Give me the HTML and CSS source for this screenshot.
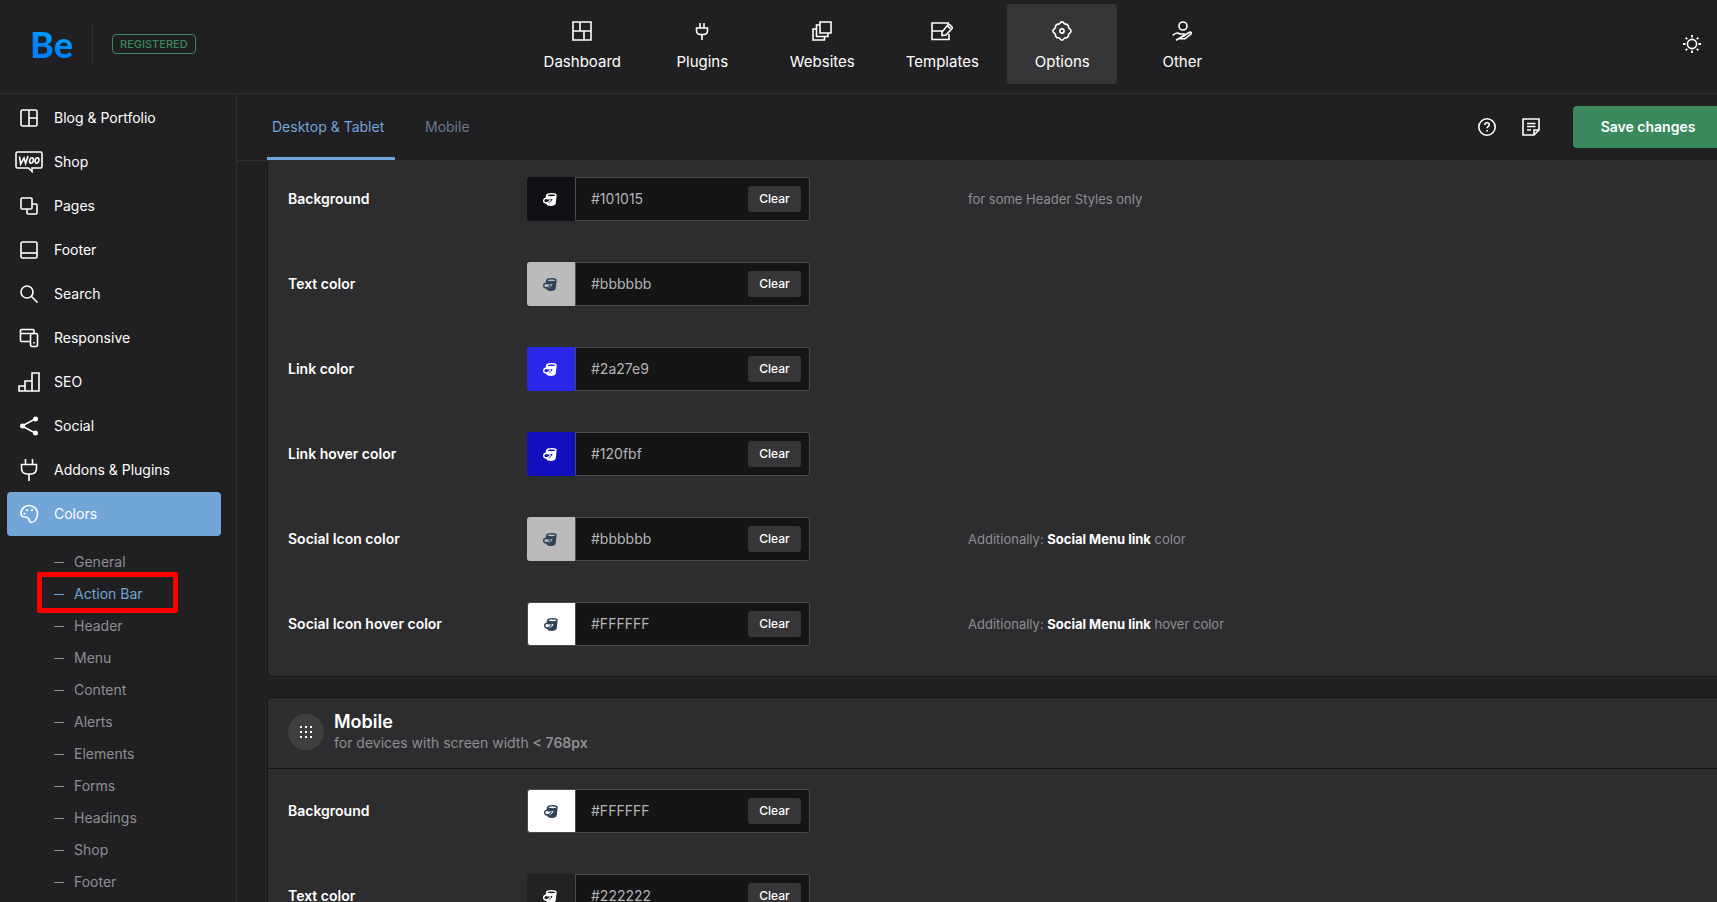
FILE: index.html
```
<!DOCTYPE html>
<html lang="en">
<head>
<meta charset="utf-8">
<meta name="viewport" content="width=device-width, initial-scale=1">
<title>Be Theme Options</title>
<link rel="stylesheet" href="styles.css">
</head>
<body>
<svg class="sprite" aria-hidden="true">
  <symbol id="bucket" viewBox="0 0 14 13"><path fill="currentColor" fill-rule="evenodd" d="M3 2.200C3.200.8 5.500 0 8.700 0c3.200 0 5.200.8 5 2.200l-1 8.300C12.500 12 10.500 13 7.900 13c-2.700 0-4.300-.8-4.600-2.200C1.200 10.800 0 9.600 0 7.800 0 6.100 1 5 2.700 4.600ZM4.400 2.300c.7.600 2.200.9 4.100.9 1.900 0 3.300-.3 4-.9-.7-.6-2-.9-4-.9s-3.400.3-4.100.9ZM2.900 5.900C1.900 6.200 1.400 6.900 1.400 7.800c0 .9.700 1.300 1.600 1.300 1.500-.1 3-1 4.200-2.700l.9.600c-1 1.700-2.300 2.700-3.600 3.200 2.500-.4 4.500-2 5-4.400-2 .8-4.600.8-6.600.1Z"/></symbol>
</svg>

<header class="topbar">
  <div class="brand">
    <a class="logo" href="#">Be</a>
    <span class="badge">REGISTERED</span>
  </div>
  <nav class="topnav" aria-label="Main">
    <a href="#"><svg class="icon" viewBox="0 0 20 20"><path d="M1 1h18v18H1ZM8 1v9M1 10h18M12 10v9"/></svg>Dashboard</a>
    <a href="#"><svg class="icon" viewBox="0 0 20 20"><path d="M8 2v5M12 2v5M4.500 7h11v2.500c0 2.500-1.500 4-4 4h-3c-2.500 0-4-1.500-4-4ZM10 13.500V19"/></svg>Plugins</a>
    <a href="#"><svg class="icon" viewBox="0 0 20 20"><path d="M8 1h11v11H8ZM8 4H4.500v11.500H16V12M4.500 8H1v11h11.500v-3.500"/></svg>Websites</a>
    <a href="#"><svg class="icon icon-wide" viewBox="0 0 22 20"><path d="M18 2H1v16.500h17V13M1 10h11M18.500 3.500l2.500 2.500c.4.500.4 1 0 1.500L15 14l-4 .5V11l6.200-7.400c.4-.4.900-.4 1.300-.1ZM16.500 5l3 2.700"/></svg>Templates</a>
    <a class="active" href="#" aria-current="page"><svg class="icon" viewBox="0 0 20 20"><path d="M10 .9C11.700.9 11.800 3 13.300 3.200c1.500-.5 3.700 1.300 3.300 3.500.7 1.200 2.500 1.500 2.500 3.300s-1.800 2.100-2.500 3.300c.4 2.200-1.800 4-3.300 3.500-1.500.2-1.600 2.300-3.300 2.300s-1.800-2.100-3.300-2.300c-1.500.5-3.700-1.300-3.300-3.500C2.700 12.100.9 11.800.9 10s1.800-2.100 2.500-3.300C3 4.500 5.200 2.700 6.700 3.200 8.200 3 8.300.9 10 .9Z"/><circle cx="10" cy="10" r="2.100"/></svg>Options</a>
    <a href="#"><svg class="icon" viewBox="0 0 20 20"><circle cx="11" cy="5" r="4"/><path d="M.8 14.500c2-2.500 5-3.200 7.200-1.500h4c1.200 0 1.200 2 0 2.200l-3 .3M13 14l4.500-2.700c1.600-.6 2.400.7 1.200 1.800L13 17.800H6.500L4 19.200Z"/></svg>Other</a>
  </nav>
  <div class="topbar-end">
    <button class="plain" type="button" aria-label="Light mode"><svg class="icon" viewBox="0 0 20 20"><circle cx="10" cy="10" r="4.600"/><path stroke-width="1.800" d="M10 1v2.500M10 16.500V19M1 10h2.500M16.500 10H19M3.600 3.600l1.600 1.600M14.800 14.800l1.600 1.600M3.600 16.400l1.600-1.600M14.800 5.200l1.600-1.600"/></svg></button>
  </div>
</header>

<div class="shell">
  <aside class="sidebar">
    <nav aria-label="Options">
      <a class="item" href="#"><svg class="icon" viewBox="0 0 20 20"><rect x="2" y="2" width="16" height="16" rx="1.500"/><path d="M10 2v16M10 10h8"/></svg>Blog &amp; Portfolio</a>
      <a class="item" href="#"><svg class="icon icon-woo" viewBox="0 0 28 22"><path d="M2.500 1h23c1 0 1.500.5 1.500 1.500v13c0 1-.5 1.500-1.500 1.500H17v3.500L13.500 17h-11C1.500 17 1 16.500 1 15.500v-13C1 1.500 1.500 1 2.500 1Z"/><path d="m4.500 5.500 1.200 7.500L9 7l1.600 5.500 2.400-7.500"/><ellipse cx="16.500" cy="9.500" rx="1.800" ry="2.800" transform="rotate(14 16.500 9.500)"/><ellipse cx="22" cy="9.500" rx="1.800" ry="2.800" transform="rotate(14 22 9.500)"/></svg>Shop</a>
      <a class="item" href="#"><svg class="icon" viewBox="0 0 20 20"><rect x="2" y="2" width="11" height="11" rx="1"/><path d="M13 8h4q1 0 1 1v8q0 1-1 1H9q-1 0-1-1v-4"/></svg>Pages</a>
      <a class="item" href="#"><svg class="icon" viewBox="0 0 20 20"><rect x="2" y="2" width="16" height="16" rx="1.500"/><path d="M2 13h16"/></svg>Footer</a>
      <a class="item" href="#"><svg class="icon" viewBox="0 0 20 20"><circle cx="8" cy="8" r="6"/><path d="m12.500 12.500 6 6"/></svg>Search</a>
      <a class="item" href="#"><svg class="icon" viewBox="0 0 20 20"><path d="M15 5V2.500q0-1-1-1H2.500q-1 0-1 1v10q0 1 1 1H11M1.500 5.500H15"/><rect x="11.500" y="5.500" width="7" height="13" rx="1.500"/><path d="M15 14v1.500"/></svg>Responsive</a>
      <a class="item" href="#"><svg class="icon icon-seo" viewBox="0 0 22 20"><path d="M1 14h6v5H1ZM7 9h7v10H7ZM14 1h7v18h-7Z"/></svg>SEO</a>
      <a class="item" href="#"><svg class="icon" viewBox="0 0 20 20"><path d="M17 2.500 3 10l14 7.500"/><g fill="currentColor" stroke="none"><circle cx="16.500" cy="3" r="2.500"/><circle cx="3.500" cy="10" r="2.500"/><circle cx="16.500" cy="17" r="2.500"/></g></svg>Social</a>
      <a class="item" href="#"><svg class="icon icon-plug" viewBox="0 0 20 24"><path d="M6.500 1v5.500M13.500 1v5.500M2.500 6.500h15V10c0 4-2 6-5.500 6H8c-3.500 0-5.500-2-5.500-6ZM10 16v7"/></svg>Addons &amp; Plugins</a>
      <a class="item active" href="#" aria-current="page"><svg class="icon" viewBox="0 0 20 20"><path d="M2 9.500C2 5 5.500 1.500 10 1.500s8.500 3.500 8.500 8c0 5-3 9-6 9-2.500 0-2-3-3.500-4.500-2-2-7 .5-7-4.500Z"/><path d="M5.500 9.500v.2M8 6v.2M13 6v.2" stroke-linecap="round" stroke-width="2.200"/></svg>Colors</a>
      <ul class="subnav">
        <li><a href="#">General</a></li>
        <li class="marked"><a class="current" href="#">Action Bar</a></li>
        <li><a href="#">Header</a></li>
        <li><a href="#">Menu</a></li>
        <li><a href="#">Content</a></li>
        <li><a href="#">Alerts</a></li>
        <li><a href="#">Elements</a></li>
        <li><a href="#">Forms</a></li>
        <li><a href="#">Headings</a></li>
        <li><a href="#">Shop</a></li>
        <li><a href="#">Footer</a></li>
      </ul>
    </nav>
  </aside>

  <main class="main">
    <div class="toolbar">
      <nav class="tabs" aria-label="Devices">
        <a class="active" href="#">Desktop &amp; Tablet</a>
        <a href="#">Mobile</a>
      </nav>
      <div class="tools">
        <button class="plain" type="button" aria-label="Help"><svg class="icon" viewBox="0 0 20 20"><circle cx="10" cy="10" r="8.200"/><path d="M7.700 8c.1-1.400 1-2.200 2.300-2.200s2.300.8 2.300 2c0 1.600-2.200 1.700-2.200 3.400M10.100 13v1.600"/></svg></button>
        <button class="plain" type="button" aria-label="Notes"><svg class="icon" viewBox="0 0 20 20"><path d="M2 2h16v11l-5 5H2ZM13 18v-5h5M6 6.500h8.500M6 9.500h8.500M6 13h4"/></svg></button>
        <button class="save" type="button">Save changes</button>
      </div>
    </div>

    <div class="content">
      <section class="card card-scrolled">
        <div class="rows">
          <div class="row"><label for="d1">Background</label><div class="field"><button class="swatch" style="background:#101015" type="button" aria-label="Pick background"><svg><use href="#bucket"/></svg></button><input id="d1" type="text" value="#101015"><button class="clear" type="button">Clear</button></div><p class="note">for some Header Styles only</p></div>
          <div class="row"><label for="d2">Text color</label><div class="field"><button class="swatch light" style="background:#bbbbbb" type="button" aria-label="Pick text color"><svg><use href="#bucket"/></svg></button><input id="d2" type="text" value="#bbbbbb"><button class="clear" type="button">Clear</button></div></div>
          <div class="row"><label for="d3">Link color</label><div class="field"><button class="swatch" style="background:#2a27e9" type="button" aria-label="Pick link color"><svg><use href="#bucket"/></svg></button><input id="d3" type="text" value="#2a27e9"><button class="clear" type="button">Clear</button></div></div>
          <div class="row"><label for="d4">Link hover color</label><div class="field"><button class="swatch" style="background:#120fbf" type="button" aria-label="Pick link hover color"><svg><use href="#bucket"/></svg></button><input id="d4" type="text" value="#120fbf"><button class="clear" type="button">Clear</button></div></div>
          <div class="row"><label for="d5">Social Icon color</label><div class="field"><button class="swatch light" style="background:#bbbbbb" type="button" aria-label="Pick social icon color"><svg><use href="#bucket"/></svg></button><input id="d5" type="text" value="#bbbbbb"><button class="clear" type="button">Clear</button></div><p class="note">Additionally: <b>Social Menu link</b> color</p></div>
          <div class="row"><label for="d6">Social Icon hover color</label><div class="field"><button class="swatch light outlined" style="background:#ffffff" type="button" aria-label="Pick social icon hover color"><svg><use href="#bucket"/></svg></button><input id="d6" type="text" value="#FFFFFF"><button class="clear" type="button">Clear</button></div><p class="note">Additionally: <b>Social Menu link</b> hover color</p></div>
        </div>
      </section>

      <section class="card">
        <header class="card-head">
          <span class="grip"><svg viewBox="0 0 14 14"><path fill="currentColor" d="M1 1h2v2H1ZM6 1h2v2H6ZM11 1h2v2h-2ZM1 6h2v2H1ZM6 6h2v2H6ZM11 6h2v2h-2ZM1 11h2v2H1ZM6 11h2v2H6ZM11 11h2v2h-2Z"/></svg></span>
          <div>
            <h2>Mobile</h2>
            <p>for devices with screen width <b>&lt; 768px</b></p>
          </div>
        </header>
        <div class="rows">
          <div class="row"><label for="m1">Background</label><div class="field"><button class="swatch light outlined" style="background:#ffffff" type="button" aria-label="Pick mobile background"><svg><use href="#bucket"/></svg></button><input id="m1" type="text" value="#FFFFFF"><button class="clear" type="button">Clear</button></div></div>
          <div class="row"><label for="m2">Text color</label><div class="field"><button class="swatch" style="background:#222222" type="button" aria-label="Pick mobile text color"><svg><use href="#bucket"/></svg></button><input id="m2" type="text" value="#222222"><button class="clear" type="button">Clear</button></div></div>
        </div>
      </section>
    </div>
  </main>
</div>
</body>
</html>
```

FILE: styles.css
```
*, ::before, ::after { box-sizing: border-box; }

body {
  margin: 0;
  height: 100vh;
  display: flex;
  flex-direction: column;
  overflow: hidden;
  background: #202022;
  color: #fff;
  font: 14px/20px Inter, sans-serif;
}

a { color: inherit; text-decoration: none; }
button, input { font: inherit; color: inherit; }
h2, p, ul { margin: 0; padding: 0; }

.sprite { position: absolute; width: 0; height: 0; }

.icon {
  flex: none;
  width: 20px;
  height: 20px;
  fill: none;
  stroke: currentColor;
  stroke-width: 1.6;
}

.plain {
  display: flex;
  padding: 0;
  border: 0;
  background: none;
}

/* Top bar */
.topbar {
  flex: none;
  display: flex;
  justify-content: space-between;
  height: 94px;
  border-bottom: 1px solid #2f2f31;
}

.brand {
  display: flex;
  align-items: center;
  height: 88px;
  padding-left: 30px;
}

.logo {
  width: 63px;
  border-right: 1px solid #2f2f31;
  font: 900 36px/40px Lato, sans-serif;
  background: linear-gradient(20deg, #0080ff 35%, #00b4ff 80%);
  background-clip: text;
  -webkit-background-clip: text;
  color: transparent;
}

.badge {
  margin-left: 19px;
  padding: 0 7px;
  border: 1px solid #39895c;
  border-radius: 4px;
  color: #39895c;
  font-size: 11px;
  font-weight: 500;
  line-height: 18px;
}

.topnav {
  display: flex;
  gap: 10px;
  padding-top: 4px;
  font-size: 15px;
}

.topnav a {
  display: flex;
  flex-direction: column;
  align-items: center;
  gap: 11px;
  width: 110px;
  height: 80px;
  padding-top: 17px;
  border-radius: 4px;
}

.topnav .active { background: #363638; }
.icon-wide { width: 22px; }

.topbar-end {
  display: flex;
  justify-content: flex-end;
  align-items: center;
  width: 148px;
  height: 88px;
  padding-right: 15px;
}

/* Columns */
.shell {
  flex: 1;
  min-height: 0;
  display: flex;
}

.sidebar {
  flex: none;
  width: 237px;
  padding: 2px 15px 0 7px;
  border-right: 1px solid #2f2f31;
  overflow: hidden;
}

.item {
  display: flex;
  align-items: center;
  gap: 15px;
  height: 44px;
  padding-left: 12px;
  border-radius: 4px;
}

.item.active { background: #72a5d8; }
.icon-woo { width: 28px; height: 22px; margin: 0 -4px; }
.icon-seo { width: 22px; margin: 0 -1px; }
.icon-plug { height: 24px; }

.subnav {
  list-style: none;
  padding: 10px 0 0 47px;
  color: #8e8e94;
}

.subnav li { position: relative; }

.subnav a {
  display: flex;
  align-items: center;
  gap: 10px;
  height: 32px;
}

.subnav a::before {
  content: "";
  width: 10px;
  height: 1px;
  background: currentColor;
}

.subnav .current { color: #72a5d8; }

.marked::after {
  content: "";
  position: absolute;
  top: -6px;
  bottom: -3px;
  left: -17px;
  width: 141px;
  border: 5px solid #f00;
  border-radius: 2px;
  pointer-events: none;
}

/* Main area */
.main {
  flex: 1;
  min-width: 0;
  display: flex;
  flex-direction: column;
  overflow: hidden;
}

.toolbar {
  flex: none;
  display: flex;
  justify-content: space-between;
  align-items: center;
  height: 67px;
  margin-right: -6px;
  padding-left: 30px;
  border-bottom: 1px solid #2f2f31;
}

.tabs {
  display: flex;
  gap: 25px;
  color: #6c7891;
}

.tabs a {
  padding: 23px 5px 20px;
  border-bottom: 3px solid transparent;
  border-radius: 2px 2px 0 0;
}

.tabs .active {
  min-width: 128px;
  color: #72a5d8;
  border-color: #72a5d8;
}

.tools {
  display: flex;
  align-items: center;
  gap: 24px;
}

.save {
  width: 150px;
  height: 42px;
  margin-left: 8px;
  padding: 0;
  border: 0;
  border-radius: 4px;
  background: #39895c;
  font-weight: 600;
}

.content {
  flex: 1;
  min-height: 0;
  display: flex;
  flex-direction: column;
  gap: 20px;
  margin-right: -6px;
  padding-left: 30px;
  overflow: hidden;
}

.card {
  flex: none;
  border: 1px solid #151517;
  border-radius: 4px;
  background: #2d2d2f;
  box-shadow: 0 2px 6px rgba(255, 255, 255, .03);
}

.card-scrolled {
  border-top: 0;
  border-radius: 0 0 4px 4px;
}

.rows {
  display: flex;
  flex-direction: column;
  gap: 41px;
  padding: 20px 20px 30px;
}

.card-scrolled .rows { padding-top: 16px; }

.row {
  display: flex;
  align-items: center;
}

.row label {
  width: 239px;
  font-weight: 600;
}

.field {
  display: flex;
  align-items: center;
  width: 283px;
  height: 44px;
  padding-right: 8px;
  border: 1px solid #4b4b4e;
  border-radius: 3px;
  background: #151515;
}

.swatch {
  flex: none;
  display: grid;
  place-items: center;
  width: 48px;
  height: 44px;
  margin: -1px 0 -1px -1px;
  padding: 0 2px 0 0;
  border: 0;
  border-radius: 3px 0 0 3px;
}

.swatch svg { width: 14px; height: 13px; }
.swatch.light { color: #2f4257; }
.swatch.outlined { border: solid #4b4b4e; border-width: 1px 0 1px 1px; }

.field input {
  flex: 1;
  min-width: 0;
  height: 42px;
  padding: 0 15px 2px;
  border: 0;
  border-left: 1px solid #4b4b4e;
  background: none;
  color: #b4b4ba;
}

.clear {
  width: 53px;
  height: 26px;
  padding: 0;
  border: 0;
  border-radius: 3px;
  background: #363638;
  font-size: 12px;
  font-weight: 500;
}

.note {
  margin-left: 158px;
  color: #8e8e94;
  font-size: 13px;
}

.note b { color: #fff; font-weight: 700; }

.card-head {
  display: flex;
  align-items: center;
  gap: 10px;
  height: 71px;
  padding: 0 20px 2px;
  border-bottom: 1px solid #151517;
}

.card-head h2 {
  font-size: 18px;
  font-weight: 600;
  line-height: 22px;
}

.card-head p { color: #8e8e94; }
.card-head b { font-weight: 600; }

.grip {
  display: grid;
  place-items: center;
  width: 36px;
  height: 36px;
  border-radius: 50%;
  background: #3f3f41;
}

.grip svg { width: 14px; height: 14px; }
```
